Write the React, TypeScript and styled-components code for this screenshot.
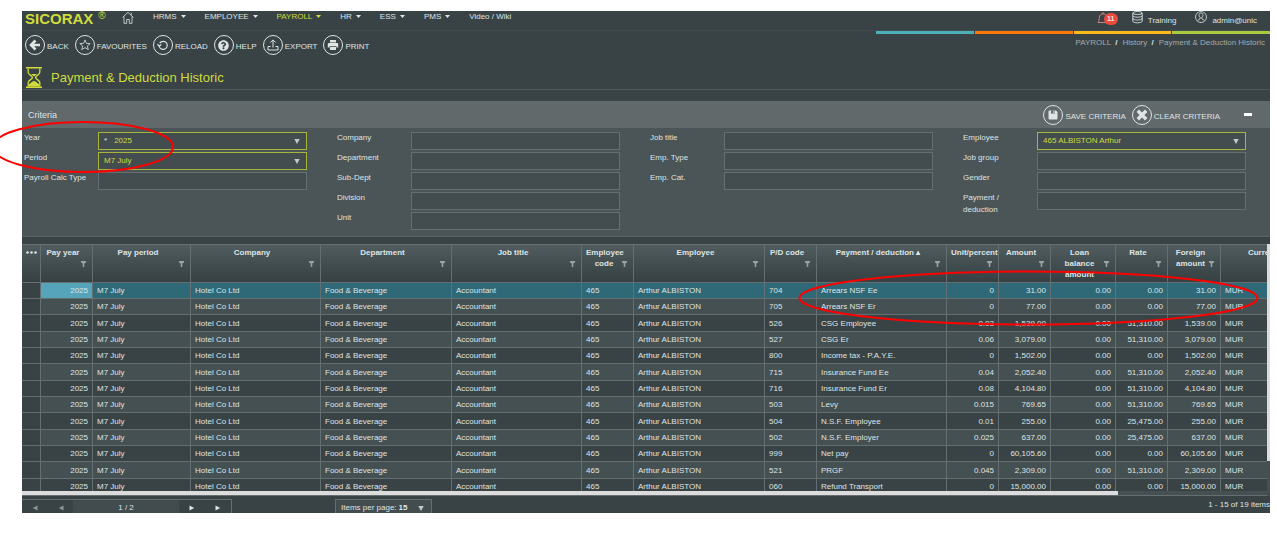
import React from 'react';
import styled, { createGlobalStyle } from 'styled-components';
import { FaQuestionCircle } from 'react-icons/fa';

const c = {
  bg: '#394345',
  panel: '#4b5456',
  panelHead: '#62696b',
  field: '#434d4f',
  line: '#656f71',
  text: '#dfe4e5',
  muted: '#a3abad',
  lime: '#cfdc3c',
  annotation: '#ff0000',
};

const GlobalStyle = createGlobalStyle`
  * { box-sizing: border-box; }
  body {
    margin: 0;
    background: #fff;
    color: ${c.text};
    font: 8px/12px "Liberation Sans", Arial, sans-serif;
  }
  button, input, select { font: inherit; color: inherit; }
  button { background: none; border: 0; padding: 0; cursor: pointer; }
  a { color: inherit; text-decoration: none; }
  svg { display: block; flex: none; }
`;

const Page = styled.div`
  position: relative;
  padding: 11px 7px 29px 22px;
  overflow: hidden;
`;
const Shell = styled.div`
  background: ${c.bg};
  overflow: hidden;
`;

/* ---------- top bar ---------- */
const TopBar = styled.header`
  display: flex;
  align-items: flex-start;
  height: 20px;
  padding: 0 13px 0 3px;
  border-bottom: 1px solid #424c4e;
`;
const Logo = styled.a`
  font-size: 15px;
  line-height: 15px;
  font-weight: bold;
  color: ${c.lime};
  display: flex;
  gap: 5px;
  width: 97px;
`;
const Reg = styled.span`
  font-size: 10px;
  line-height: 10px;
  font-weight: normal;
`;
const Nav = styled.nav`
  display: flex;
  gap: 19px;
  padding-left: 19px;
  line-height: 11px;
  flex: 1;
`;
const NavItem = styled.a<{ $active?: boolean }>`
  display: flex;
  align-items: center;
  gap: 4px;
  height: 11px;
  color: ${p => (p.$active ? c.lime : c.text)};
`;
const Account = styled.div`
  display: flex;
  gap: 19px;
`;
const AccountItem = styled.button`
  display: flex;
  gap: 5px;
  line-height: 19px;
  height: 19px;
`;
const Bell = styled.button`
  position: relative;
  width: 16px;
  height: 14px;
`;
const Badge = styled.span`
  position: absolute;
  left: 7px;
  top: 2px;
  width: 14px;
  height: 12px;
  border-radius: 6px;
  background: #ea4b3c;
  font-size: 7px;
  line-height: 12px;
  font-weight: bold;
  text-align: center;
`;

/* ---------- toolbar ---------- */
const SubBar = styled.div`
  display: flex;
  justify-content: space-between;
  height: 50px;
`;
const Tools = styled.div`
  display: flex;
  gap: 6px;
  padding: 4px 0 0 3px;
  align-items: flex-start;
`;
const ToolButton = styled.button`
  display: flex;
  align-items: flex-start;
  gap: 2px;
  height: 20px;
  line-height: 24px;
  white-space: nowrap;
`;
const Circle = styled.i`
  display: grid;
  place-items: center;
  width: 20px;
  height: 20px;
  border: 1px solid ${c.text};
  border-radius: 50%;
`;
const CrumbArea = styled.div`
  width: 394px;
`;
const Stripes = styled.div`
  display: grid;
  grid-template-columns: repeat(4, 1fr);
  gap: 1px;
`;
const Stripe = styled.div<{ $color: string }>`
  height: 3px;
  background: ${p => p.$color};
`;
const Crumbs = styled.nav`
  display: flex;
  justify-content: flex-end;
  gap: 5px;
  padding: 3px 5px 0 0;
  color: ${c.muted};
  b { color: ${c.text}; padding-left: 2px; }
`;
const TitleBar = styled.div`
  display: flex;
  align-items: center;
  gap: 9px;
  height: 24px;
  margin-top: -15px;
  padding-left: 4px;
  border-bottom: 1px solid #4f595b;
`;
const Title = styled.h1`
  margin: 0;
  font-size: 13px;
  line-height: 20px;
  font-weight: normal;
  color: ${c.lime};
`;

/* ---------- criteria ---------- */
const Criteria = styled.section`
  margin-top: 11px;
  background: ${c.panel};
  border-bottom: 1px solid #5a6466;
`;
const CriteriaHead = styled.div`
  display: flex;
  align-items: center;
  height: 27px;
  padding: 0 18px 0 6px;
  background: ${c.panelHead};
  h2 {
    flex: 1;
    margin: 0;
    font-size: 9px;
    font-weight: normal;
  }
`;
const HeadActions = styled.div`
  display: flex;
  gap: 6px;
`;
const Collapse = styled.button`
  width: 8px;
  height: 3px;
  margin-left: 24px;
  background: #fff;
`;
const CriteriaBody = styled.div`
  display: grid;
  grid-template-columns: repeat(4, 1fr);
  column-gap: 30px;
  padding: 4px 24px 4px 2px;
`;
const Column = styled.div``;
const Field = styled.div`
  display: flex;
  align-items: flex-start;
  height: 20px;
  label { width: 74px; padding-right: 30px; white-space: nowrap; }
  label[data-wrap] { white-space: normal; }
`;
const Control = styled.div<{ $set?: boolean }>`
  display: flex;
  align-items: center;
  gap: 7px;
  flex: 1;
  height: 18px;
  padding: 0 6px 0 5px;
  background: ${c.field};
  border: 1px solid ${p => (p.$set ? '#a9b43d' : c.line)};
  color: ${c.lime};
`;
const Star = styled.span`
  color: ${c.text};
`;
const Select = styled.select`
  appearance: none;
  flex: 1;
  min-width: 0;
  height: 16px;
  padding: 0;
  border: 0;
  outline: 0;
  background: transparent;
`;
const TextInput = styled.input`
  flex: 1;
  min-width: 0;
  height: 16px;
  padding: 0;
  border: 0;
  outline: 0;
  background: transparent;
`;

/* ---------- grid ---------- */
const GridArea = styled.div`
  display: flex;
  margin-top: 7px;
`;
const GridMain = styled.div`
  flex: 1;
  min-width: 0;
`;
const Viewport = styled.div`
  max-height: 247px;
  overflow: hidden;
`;
const Table = styled.table`
  table-layout: fixed;
  width: 1296px;
  border-collapse: separate;
  border-spacing: 0;
`;
const Th = styled.th`
  height: 38px;
  padding: 0;
  vertical-align: top;
  border-top: 1px solid ${c.line};
  border-right: 1px solid ${c.line};
  background: linear-gradient(#505c5f, #364042);
`;
const ThInner = styled.div`
  display: flex;
  height: 36px;
  padding: 2px 6px 0 4px;
  line-height: 11px;
  overflow: hidden;
`;
const ThLabel = styled.span`
  flex: 1;
  min-width: 0;
  text-align: center;
`;
const Filter = styled.button`
  width: 5px;
  height: 6px;
  margin-top: 14px;
`;
const Dots = styled.button`
  width: 100%;
  height: 14px;
  display: grid;
  place-items: center;
`;
const Row = styled.tr<{ $selected?: boolean }>`
  height: 16px;
  background: ${p => (p.$selected ? '#2f6877' : c.bg)};
  &:nth-child(3n) { height: 17px; }
  &:nth-child(even) { background: #445052; }
  td:first-child { background: ${c.bg}; }
  td:nth-child(2) { background: ${p => (p.$selected ? '#56a4ba' : 'transparent')}; }
`;
const Td = styled.td<{ $num?: boolean }>`
  padding: 1px 4px 0 4px;
  line-height: 14px;
  white-space: nowrap;
  overflow: hidden;
  text-align: ${p => (p.$num ? 'right' : 'left')};
  border-top: 1px solid ${c.line};
  border-right: 1px solid ${c.line};
`;
const HTrack = styled.div`
  height: 5px;
  background: #465052;
  border-bottom: 1px solid ${c.line};
`;
const HThumb = styled.div`
  width: 88%;
  height: 4px;
  background: #dcdcdc;
`;
const VTrack = styled.div`
  width: 3px;
  background: #465052;
`;
const VThumb = styled.div`
  height: 86%;
  background: #dcdcdc;
`;

/* ---------- footer ---------- */
const Footer = styled.footer`
  display: flex;
  align-items: flex-start;
  height: 17px;
  overflow: hidden;
`;
const Pager = styled.div`
  display: grid;
  grid-template-columns: 26px 25px 106px 26px 26px;
  width: 210px;
  height: 18px;
  margin-top: 3px;
  border: 1px solid ${c.line};
  border-left: 0;
  background: #424c4e;
`;
const PageButton = styled.button`
  display: grid;
  place-items: center;
  height: 16px;
  background: ${c.bg};
`;
const PageNumber = styled.span`
  text-align: center;
  line-height: 16px;
`;
const PageSize = styled.label`
  display: flex;
  align-items: center;
  gap: 2px;
  width: 97px;
  height: 18px;
  margin: 3px auto 0 103px;
  padding: 0 7px 0 5px;
  border: 1px solid ${c.line};
  background: ${c.field};
  white-space: nowrap;
  select { font-weight: bold; }
`;
const Count = styled.span`
  line-height: 17px;
  white-space: nowrap;
`;

const Annotations = styled.svg`
  position: absolute;
  left: 0;
  top: 0;
  pointer-events: none;
`;

const Down = ({ color = '#c3cacb' }: { color?: string }) => (
  <svg width="6" height="5" viewBox="0 0 6 5"><path d="M0.3 0H5.7L3 5Z" fill={color} /></svg>
);
const Caret = () => (
  <svg width="5" height="3" viewBox="0 0 5 3"><path d="M0 0H5L2.5 3Z" fill="currentColor" /></svg>
);
const PlayIcon = ({ back, dim }: { back?: boolean; dim?: boolean }) => (
  <svg width="6" height="6" viewBox="0 0 6 6">
    <path d={back ? 'M5.500 .5V5.500L.8 3Z' : 'M.5 .5V5.500L5.200 3Z'} fill={dim ? '#8d9698' : '#dfe4e5'} />
  </svg>
);
const HomeIcon = () => (
  <svg width="12" height="13" viewBox="0 0 12 13" fill="none" stroke={c.text} strokeWidth="0.8">
    <path d="M.5 6.5 6 1.3 11.5 6.5M2 5.5V12.3H4.7V8.5H7.3V12.3H10V5.5M9.3 4V1.8" />
  </svg>
);
const BellIcon = () => (
  <svg width="12" height="13" viewBox="0 0 12 13" fill="none" stroke="#e08a82" strokeWidth="0.9">
    <path d="M1 10.5C2.3 9 2 7.500 2.300 5.500 2.600 3 4 2 6 1.800 8 2 9.400 3 9.700 5.500 10 7.500 9.700 9 11 10.500ZM5 1.600C5.200.5 6.800.5 7 1.600" />
  </svg>
);
const DbIcon = () => (
  <svg width="11" height="13" viewBox="0 0 11 13" fill="none" stroke={c.text} strokeWidth="0.9">
    <ellipse cx="5.500" cy="2" rx="4.700" ry="1.500" />
    <path d="M.8 2V10.200C.8 12.300 10.200 12.300 10.200 10.200V2M.8 4.700C.8 6.700 10.200 6.700 10.200 4.700M.8 7.400C.8 9.500 10.200 9.500 10.200 7.400" />
  </svg>
);
const UserIcon = () => (
  <svg width="12" height="13" viewBox="0 0 12 13" fill="none" stroke={c.text} strokeWidth="0.8">
    <circle cx="6" cy="6" r="5.500" />
    <path d="M6 2C4.500 2 3.900 3 4.100 4.500 4.200 5.800 5 6.900 6 6.900S7.800 5.800 7.900 4.500C8.100 3 7.500 2 6 2ZM5 6.600V7.800L2.600 9.500M7 6.600V7.800L9.400 9.500" />
  </svg>
);
const BackIcon = () => (
  <svg width="12" height="12" viewBox="0 0 12 12" fill="none" stroke={c.text} strokeWidth="2.600">
    <path d="M11 6H3M6.500 1.500 2 6 6.500 10.500" />
  </svg>
);
const StarIcon = () => (
  <svg width="12" height="12" viewBox="0 0 12 12" fill="none" stroke={c.text} strokeWidth="0.8">
    <path d="M6 .9 7.400 4.400 11.200 4.600 8.300 7 9.300 10.700 6 8.600 2.700 10.700 3.700 7 .8 4.600 4.600 4.400Z" />
  </svg>
);
const ReloadIcon = () => (
  <svg width="12" height="12" viewBox="0 0 12 12" fill="none" stroke={c.text} strokeWidth="1.200">
    <path d="M2.200 6.500A4 4 0 1 0 6.200 2.300C4.800 2.300 3.500 3 2.700 4.200" />
    <path d="M.5 5.200 2.200 7.200 4.300 5.500" />
  </svg>
);
const ExportIcon = () => (
  <svg width="12" height="12" viewBox="0 0 12 12" fill="none" stroke={c.text} strokeWidth="1">
    <path d="M6 8.500V1M3.400 3.500 6 .9 8.600 3.500M3.500 7.500H1V11H11V7.500H8.500" />
  </svg>
);
const PrintIcon = () => (
  <svg width="12" height="12" viewBox="0 0 12 12" fill={c.text}>
    <path d="M3 1H9V3.500H3ZM1.800 4H10.200Q11.200 4 11.200 5V8.500H9.500V7.200H2.500V8.500H.8V5Q.8 4 1.800 4ZM3 8H9V11H3Z" />
  </svg>
);
const SaveIcon = () => (
  <svg width="10" height="10" viewBox="0 0 10 10">
    <path d="M1.500.5H8L9.500 2V8.500Q9.500 9.500 8.500 9.500H1.500Q.5 9.500 .5 8.500V1.500Q.5.5 1.500.5Z" fill={c.text} />
    <path d="M3 .5H7V3.500H3Z" fill={c.panelHead} />
    <path d="M5.300 1H6.500V3H5.300Z" fill={c.text} />
  </svg>
);
const ClearIcon = () => (
  <svg width="12" height="12" viewBox="0 0 12 12" stroke={c.text} strokeWidth="3.400">
    <path d="M1.800 1.800 10.200 10.200M10.200 1.800 1.800 10.200" />
  </svg>
);
const Hourglass = () => (
  <svg width="16" height="21" viewBox="0 0 16 21">
    <path d="M0 .8H16M0 20.200H16" stroke={c.lime} strokeWidth="1.500" />
    <path d="M2.200 1.500V5.500C2.200 7.500 6.500 9 6.500 10.500S2.200 13.500 2.200 15.500V19.500M13.800 1.500V5.500C13.800 7.500 9.500 9 9.500 10.500S13.800 13.500 13.800 15.500V19.500" fill="none" stroke={c.lime} strokeWidth="1.300" />
    <path d="M2.500 19.500V17.500C4.500 16.500 6 14.500 8 14 10 14.500 11.500 16.500 13.500 17.500V19.500ZM5 7H11L8 9.500Z" fill={c.lime} />
  </svg>
);
const FilterIcon = () => (
  <svg width="5" height="6" viewBox="0 0 5 6"><path d="M0 0H5V1.500L3.300 2.500V6H1.700V2.500L0 1.500Z" fill="#98a1a3" /></svg>
);

const menu: [string, boolean][] = [
  ['HRMS', true], ['EMPLOYEE', true], ['PAYROLL', true], ['HR', true], ['ESS', true], ['PMS', true], ['Video / Wiki', false],
];
const tools: [string, React.ReactNode][] = [
  ['BACK', <BackIcon />],
  ['FAVOURITES', <StarIcon />],
  ['RELOAD', <ReloadIcon />],
  ['HELP', <FaQuestionCircle size={11} />],
  ['EXPORT', <ExportIcon />],
  ['PRINT', <PrintIcon />],
];

type FieldDef = { label: string; value?: string; required?: boolean; wrap?: boolean };
const fields: FieldDef[][] = [
  [{ label: 'Year', value: '2025', required: true }, { label: 'Period', value: 'M7 July' }, { label: 'Payroll Calc Type' }],
  [{ label: 'Company' }, { label: 'Department' }, { label: 'Sub-Dept' }, { label: 'Division' }, { label: 'Unit' }],
  [{ label: 'Job title' }, { label: 'Emp. Type' }, { label: 'Emp. Cat.' }],
  [{ label: 'Employee', value: '465 ALBISTON Arthur' }, { label: 'Job group' }, { label: 'Gender' }, { label: 'Payment / deduction', wrap: true }],
];

const columns: [string, number][] = [
  ['Pay year', 52], ['Pay period', 98], ['Company', 130], ['Department', 131], ['Job title', 130],
  ['Employee code', 52], ['Employee', 131], ['P/D code', 52], ['Payment / deduction', 130],
  ['Unit/percent', 52], ['Amount', 52], ['Loan balance amount', 65], ['Rate', 52], ['Foreign amount', 53], ['Currency', 97],
];
const numeric = new Set([0, 9, 10, 11, 12, 13]);

const entries = [
  ['704', 'Arrears NSF Ee', '0', '31.00', '0.00'],
  ['705', 'Arrears NSF Er', '0', '77.00', '0.00'],
  ['526', 'CSG Employee', '0.03', '1,539.00', '51,310.00'],
  ['527', 'CSG Er', '0.06', '3,079.00', '51,310.00'],
  ['800', 'Income tax - P.A.Y.E.', '0', '1,502.00', '0.00'],
  ['715', 'Insurance Fund Ee', '0.04', '2,052.40', '51,310.00'],
  ['716', 'Insurance Fund Er', '0.08', '4,104.80', '51,310.00'],
  ['503', 'Levy', '0.015', '769.65', '51,310.00'],
  ['504', 'N.S.F. Employee', '0.01', '255.00', '25,475.00'],
  ['502', 'N.S.F. Employer', '0.025', '637.00', '25,475.00'],
  ['999', 'Net pay', '0', '60,105.60', '0.00'],
  ['521', 'PRGF', '0.045', '2,309.00', '51,310.00'],
  ['060', 'Refund Transport', '0', '15,000.00', '0.00'],
];

function CriteriaField({ label, value, required, wrap }: FieldDef) {
  const id = label.toLowerCase().replace(/[^a-z]+/g, '-');
  return (
    <Field>
      <label htmlFor={id} data-wrap={wrap || undefined}>{label}</label>
      <Control $set={!!value}>
        {required && <Star>*</Star>}
        {value ? (
          <>
            <Select id={id} defaultValue={value}><option>{value}</option></Select>
            <Down />
          </>
        ) : (
          <TextInput id={id} type="text" />
        )}
      </Control>
    </Field>
  );
}

export default function App() {
  return (
    <Page>
      <GlobalStyle />
      <Shell>
        <TopBar>
          <Logo href="#">SICORAX<Reg>®</Reg></Logo>
          <a href="#" aria-label="Home"><HomeIcon /></a>
          <Nav>
            {menu.map(([name, hasMenu]) => (
              <NavItem key={name} href="#" $active={name === 'PAYROLL'}>{name}{hasMenu && <Caret />}</NavItem>
            ))}
          </Nav>
          <Account>
            <Bell aria-label="Notifications"><BellIcon /><Badge>11</Badge></Bell>
            <AccountItem><DbIcon />Training</AccountItem>
            <AccountItem><UserIcon />admin@unic</AccountItem>
          </Account>
        </TopBar>

        <SubBar>
          <Tools>
            {tools.map(([name, icon]) => (
              <ToolButton key={name}><Circle>{icon}</Circle><span>{name}</span></ToolButton>
            ))}
          </Tools>
          <CrumbArea>
            <Stripes>
              {['#4db1b9', '#fa780c', '#fabb1a', '#a9ca3c'].map(color => <Stripe key={color} $color={color} />)}
            </Stripes>
            <Crumbs aria-label="Breadcrumb">
              <a href="#">PAYROLL <b>/</b></a>
              <a href="#">History <b>/</b></a>
              <span>Payment &amp; Deduction Historic</span>
            </Crumbs>
          </CrumbArea>
        </SubBar>
        <TitleBar><Hourglass /><Title>Payment &amp; Deduction Historic</Title></TitleBar>

        <Criteria>
          <CriteriaHead>
            <h2>Criteria</h2>
            <HeadActions>
              <ToolButton><Circle><SaveIcon /></Circle><span>SAVE CRITERIA</span></ToolButton>
              <ToolButton><Circle><ClearIcon /></Circle><span>CLEAR CRITERIA</span></ToolButton>
            </HeadActions>
            <Collapse aria-label="Collapse" />
          </CriteriaHead>
          <CriteriaBody>
            {fields.map((group, i) => (
              <Column key={i}>{group.map(f => <CriteriaField key={f.label} {...f} />)}</Column>
            ))}
          </CriteriaBody>
        </Criteria>

        <GridArea>
          <GridMain>
            <Viewport>
              <Table>
                <colgroup>
                  <col style={{ width: 19 }} />
                  {columns.map(([name, width]) => <col key={name} style={{ width }} />)}
                </colgroup>
                <thead>
                  <tr>
                    <Th>
                      <Dots aria-label="Columns">
                        <svg width="11" height="3" viewBox="0 0 11 3" fill={c.text}>
                          <circle cx="1.500" cy="1.500" r="1.300" /><circle cx="5.500" cy="1.500" r="1.300" /><circle cx="9.500" cy="1.500" r="1.300" />
                        </svg>
                      </Dots>
                    </Th>
                    {columns.map(([name]) => (
                      <Th key={name} scope="col">
                        <ThInner>
                          <ThLabel>{name}{name === 'Payment / deduction' && ' ▴'}</ThLabel>
                          <Filter aria-label={`Filter ${name}`}><FilterIcon /></Filter>
                        </ThInner>
                      </Th>
                    ))}
                  </tr>
                </thead>
                <tbody>
                  {entries.map(([code, name, unit, amount, rate], r) => (
                    <Row key={code} $selected={r === 0}>
                      <Td />
                      {['2025', 'M7 July', 'Hotel Co Ltd', 'Food & Beverage', 'Accountant', '465', 'Arthur ALBISTON',
                        code, name, unit, amount, '0.00', rate, amount, 'MUR'].map((v, i) => (
                        <Td key={i} $num={numeric.has(i)}>{v}</Td>
                      ))}
                    </Row>
                  ))}
                </tbody>
              </Table>
            </Viewport>
            <HTrack><HThumb /></HTrack>
          </GridMain>
          <VTrack><VThumb /></VTrack>
        </GridArea>

        <Footer>
          <Pager>
            <PageButton aria-label="First page"><PlayIcon back dim /></PageButton>
            <PageButton aria-label="Previous page"><PlayIcon back dim /></PageButton>
            <PageNumber>1 / 2</PageNumber>
            <PageButton aria-label="Next page"><PlayIcon /></PageButton>
            <PageButton aria-label="Last page"><PlayIcon /></PageButton>
          </Pager>
          <PageSize>
            Items per page:
            <Select defaultValue="15"><option>15</option></Select>
            <Down />
          </PageSize>
          <Count>1 - 15 of 19 items</Count>
        </Footer>
      </Shell>

      <Annotations width="1277" height="542" fill="none" stroke={c.annotation} strokeWidth="2" aria-hidden="true">
        <ellipse cx="83" cy="147" rx="90" ry="25" />
        <ellipse cx="1028.500" cy="298" rx="229" ry="26.500" />
      </Annotations>
    </Page>
  );
}
